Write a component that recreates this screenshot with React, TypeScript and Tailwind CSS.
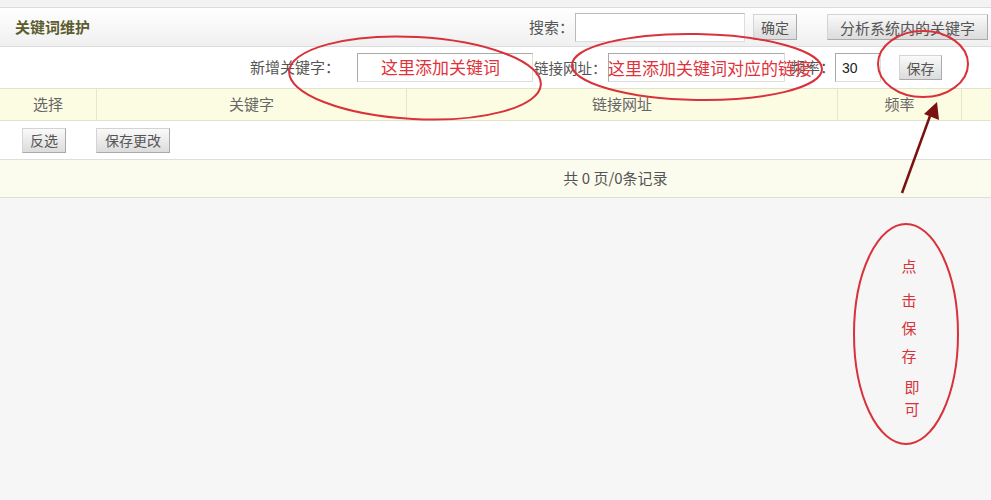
const cjk = { fontFamily: '"Noto Sans CJK SC", "Liberation Serif", serif' };

const Btn = ({ label, className = "" }: { label: string; className?: string }) => (
  <button
    className={`shrink-0 whitespace-nowrap h-[25px] bg-gradient-to-b from-[#fafafa] to-[#dcdcdc] border border-[#d4d4d4] border-r-[#aaa] border-b-[#aaa] text-[14px] text-[#555] leading-none ${className}`}
  >
    {label}
  </button>
);

const Annotations = () => (
  <svg className="absolute inset-0 pointer-events-none" width="991" height="500" viewBox="0 0 991 500">
    <g fill="none" stroke="#d8323a" strokeWidth="2">
      <ellipse cx="415" cy="78" rx="126" ry="41" transform="rotate(3 415 78)" />
      <ellipse cx="697" cy="67" rx="125" ry="33" transform="rotate(1 697 67)" />
      <ellipse cx="923" cy="64" rx="45" ry="33" />
      <ellipse cx="906" cy="334" rx="52" ry="110" />
    </g>
    <line x1="902" y1="193" x2="930" y2="116" stroke="#7a1010" strokeWidth="2.5" />
    <polygon points="937,102 939,120 924,114" fill="#7a1010" />
  </svg>
);

export default function App() {
  return (
    <div className="relative w-[991px] h-[500px] overflow-hidden bg-[#f6f6f6]" style={cjk}>
      <div className="h-[8px] bg-[#f3f3f3] border-b border-[#dcdcdc]" />

      {/* header */}
      <div className="h-[39px] flex items-center bg-gradient-to-b from-white to-[#f0f0f0] border-b border-[#dcdcdc] pl-[15px] pr-[3px]">
        <span className="text-[15px] font-bold text-[#5c5c2e]">关键词维护</span>
        <div className="ml-auto flex items-center">
          <span className="text-[15px] text-[#555] whitespace-nowrap">搜索：</span>
          <input className="ml-[1px] w-[170px] h-[29px] bg-white border border-[#bbb] border-b-[#ddd] border-r-[#ddd]" />
          <Btn label="确定" className="ml-[8px] w-[44px] h-[26px]" />
          <Btn label="分析系统内的关键字" className="ml-[30px] w-[161px] h-[26px] text-[15px]" />
        </div>
      </div>

      {/* add row */}
      <div className="h-[41px] flex items-center bg-white pl-[250px] text-[15px] text-[#555] whitespace-nowrap">
        <span className="w-[107px] shrink-0">新增关键字：</span>
        <input className="shrink-0 w-[176px] h-[29px] border border-[#aaa] border-b-[#ddd] border-r-[#ddd]" />
        <span className="ml-[1px] w-[74px] shrink-0 text-[14.5px]">链接网址：</span>
        <input className="shrink-0 w-[177px] h-[29px] border border-[#aaa] border-b-[#ddd] border-r-[#ddd]" />
        <span className="ml-[5px] w-[45px] shrink-0">频率：</span>
        <input
          defaultValue="30"
          className="shrink-0 w-[46px] h-[29px] border border-[#aaa] border-b-[#ddd] border-r-[#ddd] pl-[6px] text-[14px] text-[#222]"
          style={{ fontFamily: '"Liberation Sans", Arial, sans-serif' }}
        />
        <Btn label="保存" className="ml-[18px] w-[43px] h-[24px]" />
      </div>

      {/* table header */}
      <div className="h-[33px] flex bg-[#fcfce3] border-y border-[#e2e2d0] text-[15px] text-[#666]">
        <div className="w-[97px] flex items-center justify-center border-r border-[#e6e6c8]">选择</div>
        <div className="w-[310px] flex items-center justify-center border-r border-[#e6e6c8]">关键字</div>
        <div className="w-[431px] flex items-center justify-center border-r border-[#e6e6c8]">链接网址</div>
        <div className="w-[124px] flex items-center justify-center border-r border-[#e6e6c8]">频率</div>
        <div className="flex-1" />
      </div>

      {/* action row */}
      <div className="h-[38px] flex items-center bg-white pl-[22px]">
        <Btn label="反选" className="w-[44px]" />
        <Btn label="保存更改" className="ml-[30px] w-[74px]" />
      </div>

      {/* pager */}
      <div className="h-[39px] flex items-center justify-center pl-[240px] bg-[#fbfbee] border-y border-[#dedede] text-[15px] text-[#555] whitespace-pre">
        共 0 页/0条记录
      </div>

      {/* red notes */}
      <span className="absolute left-[381px] top-[58px] text-[17px] text-[#e0323a] leading-none whitespace-nowrap">这里添加关键词</span>
      <span className="absolute left-[608px] top-[59px] text-[17px] text-[#e0323a] leading-none whitespace-nowrap">这里添加关键词对应的链接</span>
      <div className="absolute left-[898px] top-[258px] w-[22px] flex flex-col items-center text-[15px] text-[#d8323a] leading-none">
        <span>点</span>
        <span className="mt-[19px]">击</span>
        <span className="mt-[13px]">保</span>
        <span className="mt-[13px]">存</span>
        <span className="mt-[16px] ml-[6px]">即</span>
        <span className="mt-[7px] ml-[6px]">可</span>
      </div>
      <Annotations />
    </div>
  );
}
